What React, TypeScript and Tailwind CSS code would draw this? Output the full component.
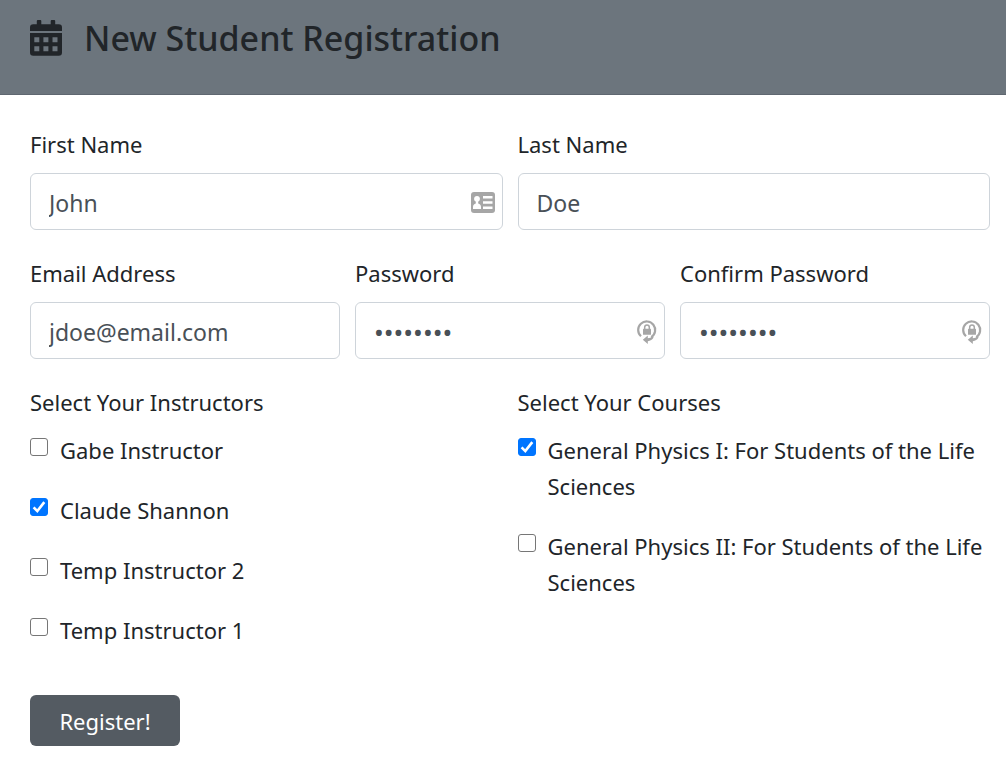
import { useState } from "react";

function CalendarIcon() {
  return (
    <svg viewBox="0 0 32 36" className="mt-1 mr-[22px] h-9 w-8 shrink-0" fill="currentColor" aria-hidden="true">
      <path d="M0 11V7.500A3.300 3.300 0 0 1 3.300 4.200H6.800V1Q6.800 0 7.800 0h2.500q1 0 1 1v3.200h9.400V1q0-1 1-1h2.500q1 0 1 1v3.200h3.500A3.300 3.300 0 0 1 32 7.500V11z" />
      <path
        fillRule="evenodd"
        d="M0 13h32v19.500a3.300 3.300 0 0 1-3.300 3.300H3.300A3.300 3.300 0 0 1 0 32.500zM4.300 17.200v5h5v-5zM13.400 17.200v5h5v-5zM22.500 17.200v5h5v-5zM4.300 26.300v5h5v-5zM13.400 26.300v5h5v-5zM22.500 26.300v5h5v-5z"
      />
    </svg>
  );
}

function ContactCardIcon() {
  return (
    <svg viewBox="0 0 24 21" className="h-[21px] w-6" aria-hidden="true">
      <rect width="24" height="21" rx="3" fill="#a6a6a6" />
      <circle cx="6" cy="6.800" r="2.900" fill="#fff" />
      <path d="M4.800 8h2.400v3.500c1.800.6 2.800 1.600 2.800 3.500v2H2v-2c0-1.900 1-2.900 2.800-3.500z" fill="#fff" />
      <path d="M12 4h9.500v2.400H12zM12 9.300h9.500v2.400H12zM12 14.600h9.500V17H12z" fill="#fff" />
    </svg>
  );
}

function PasswordIcon() {
  return (
    <svg viewBox="0 0 20 25" className="h-[25px] w-5" aria-hidden="true">
      <path d="M4 17.300A8.500 8.500 0 1 1 14.300 18.100" fill="none" stroke="#a6a6a6" strokeWidth="2.200" />
      <path d="M5.800 20.700l5-4.200v2.700q3 0 4.600-2l1.200 1.400q-1.900 3.400-5.800 3.600v2.700z" fill="#a6a6a6" />
      <rect x="6" y="9.800" width="8" height="6" rx=".6" fill="#a6a6a6" />
      <path d="M7.700 10.300V8.300a2.300 2.300 0 0 1 4.600 0v2" fill="none" stroke="#a6a6a6" strokeWidth="1.500" />
    </svg>
  );
}

type FieldProps = {
  id: string;
  label: string;
  value: string;
  type?: string;
  icon?: "card" | "password";
};

function Field({ id, label, value, type = "text", icon }: FieldProps) {
  const [text, setText] = useState(value);
  const size = type === "password" ? "text-[26px]" : "text-[23px]";
  return (
    <div className="min-w-0 flex-1">
      <label htmlFor={id} className="mb-[11px] block">
        {label}
      </label>
      <div className="relative">
        <input
          id={id}
          type={type}
          value={text}
          onChange={(e) => setText(e.target.value)}
          className={`block h-[57px] w-full rounded-md border border-[#ced4da] bg-white pt-0.5 pr-12 pl-[18px] text-[#495057] ${size}`}
        />
        {icon && (
          <span className="pointer-events-none absolute inset-y-0 right-2 flex items-center pt-0.5">
            {icon === "card" ? <ContactCardIcon /> : <PasswordIcon />}
          </span>
        )}
      </div>
    </div>
  );
}

type Option = { id: string; label: string; checked?: boolean };

function Choices({ title, options }: { title: string; options: Option[] }) {
  return (
    <fieldset className="min-w-0 flex-1">
      <legend className="mb-3">{title}</legend>
      <div className="flex flex-col gap-6">
        {options.map((o) => (
          <div key={o.id} className="flex items-start gap-3">
            <span className="mt-1.5 grid shrink-0">
              <input
                id={o.id}
                type="checkbox"
                defaultChecked={o.checked}
                className="peer col-start-1 row-start-1 size-[18px] appearance-none rounded-[3px] border border-[#767676] bg-white checked:border-[#0075ff] checked:bg-[#0075ff]"
              />
              <svg
                viewBox="0 0 18 18"
                className="pointer-events-none invisible col-start-1 row-start-1 size-[18px] peer-checked:visible"
                aria-hidden="true"
              >
                <path d="M3.600 9.400l3.700 3.700 7-9" fill="none" stroke="#fff" strokeWidth="2.600" />
              </svg>
            </span>
            <label htmlFor={o.id}>{o.label}</label>
          </div>
        ))}
      </div>
    </fieldset>
  );
}

const instructors: Option[] = [
  { id: "gabe", label: "Gabe Instructor" },
  { id: "claude", label: "Claude Shannon", checked: true },
  { id: "temp2", label: "Temp Instructor 2" },
  { id: "temp1", label: "Temp Instructor 1" },
];

const courses: Option[] = [
  { id: "physics1", label: "General Physics I: For Students of the Life Sciences", checked: true },
  { id: "physics2", label: "General Physics II: For Students of the Life Sciences" },
];

export default function App() {
  return (
    <div className="min-h-screen bg-white font-['Segoe_UI','Noto_Sans',sans-serif] text-[22px] leading-9 text-[#212529]">
      <header className="flex items-start border-b border-[#5f6770] bg-[#6c757d] pt-4 pr-4 pb-[34px] pl-[30px]">
        <CalendarIcon />
        <h1 className="text-[34px] leading-[44px] font-medium">New Student Registration</h1>
      </header>
      <form className="pt-[31px] pr-4 pb-[34px] pl-[30px]" onSubmit={(e) => e.preventDefault()}>
        <div className="flex gap-[15px]">
          <Field id="first" label="First Name" value="John" icon="card" />
          <Field id="last" label="Last Name" value="Doe" />
        </div>
        <div className="mt-[25px] flex gap-[15px]">
          <Field id="email" label="Email Address" value="jdoe@email.com" type="email" />
          <Field id="password" label="Password" value="password" type="password" icon="password" />
          <Field id="confirm" label="Confirm Password" value="password" type="password" icon="password" />
        </div>
        <div className="mt-[25px] flex gap-[15px]">
          <Choices title="Select Your Instructors" options={instructors} />
          <Choices title="Select Your Courses" options={courses} />
        </div>
        <button type="submit" className="mt-[47px] h-[51px] w-[150px] rounded-md bg-[#545b62] text-white">
          Register!
        </button>
      </form>
    </div>
  );
}
